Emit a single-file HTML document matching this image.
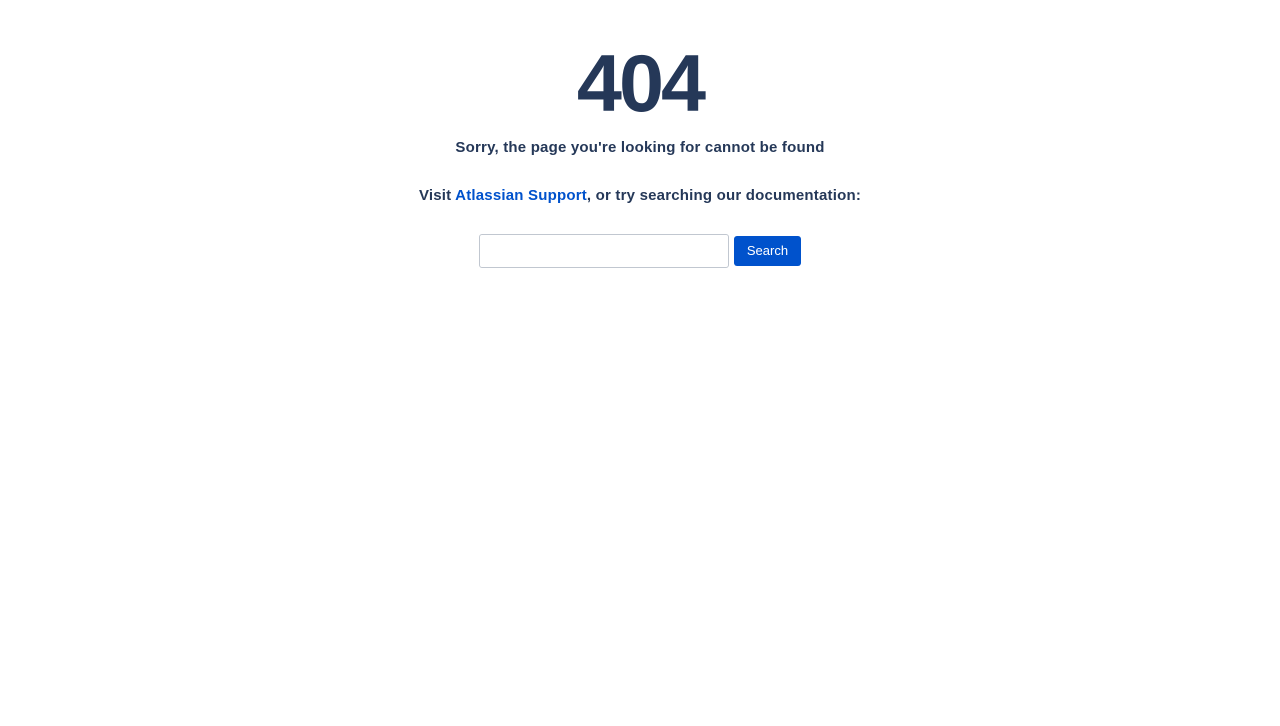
<!DOCTYPE html>
<html><head><meta charset="utf-8"><style>
body{margin:0;background:#fff;font-family:"Liberation Sans",Arial,sans-serif;color:#253858;width:1280px;height:726px;overflow:hidden}
h1{position:absolute;left:0;right:0;top:34px;margin:0;font-size:81px;font-weight:bold;line-height:100px;letter-spacing:-3px;color:#253858;text-align:center}
.p1{position:absolute;left:0;right:0;top:139px;font-size:15px;font-weight:bold;line-height:18px;text-align:center;letter-spacing:0.2px}
.p2{position:absolute;left:0;right:0;top:187px;font-size:15px;font-weight:bold;line-height:18px;text-align:center;letter-spacing:0.2px}
a{color:#0052cc;text-decoration:none}
.in{position:absolute;left:479px;top:234px;width:248px;height:32px;border:1px solid #c1c7d0;border-radius:3px;box-sizing:content-box}
.btn{position:absolute;left:734px;top:236px;width:67px;height:30px;background:#0052cc;color:#fff;border-radius:3px;font-size:13px;line-height:30px;text-align:center}
</style></head><body>
<h1>404</h1>
<div class="p1">Sorry, the page you're looking for cannot be found</div>
<div class="p2">Visit <a href="#">Atlassian Support</a>, or try searching our documentation:</div>
<div class="in"></div>
<div class="btn">Search</div>
</body></html>
